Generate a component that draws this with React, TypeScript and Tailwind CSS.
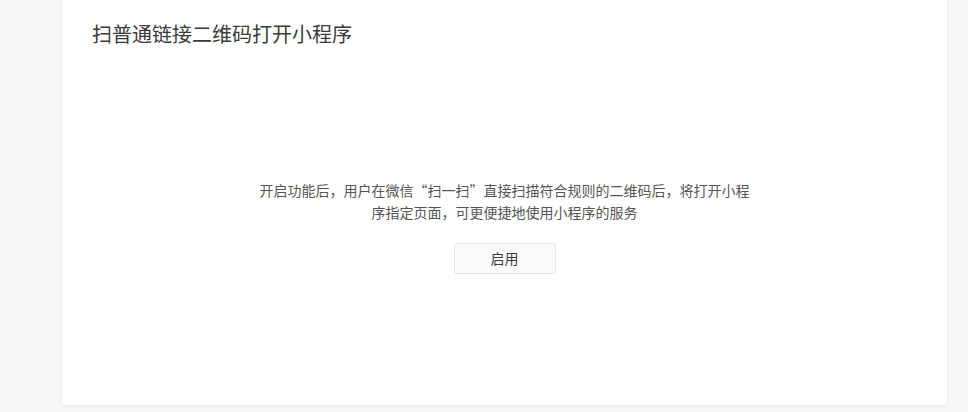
export default function App() {
  return (
    <div
      className="w-[968px] h-[412px] bg-[#f6f7f9] pl-[62px] pr-[21px] pb-[7px]"
      style={{ fontFamily: '"Noto Sans CJK SC", "Liberation Sans", sans-serif' }}
    >
      <div className="h-full bg-white rounded-b-[4px] shadow-[0_1px_3px_rgba(0,0,0,0.08)] pt-[22px] px-[30px] flex flex-col">
        <h1 className="text-[20px] leading-[24px] text-[#3a3a3a] font-normal">扫普通链接二维码打开小程序</h1>
        <div className="mt-[133px] flex flex-col items-center">
          <p className="w-[496px] text-center text-[14px] leading-[22px] text-[#555555]">
            开启功能后，用户在微信“扫一扫”直接扫描符合规则的二维码后，将打开小程序指定页面，可更便捷地使用小程序的服务
          </p>
          <button className="mt-[20px] w-[102px] h-[31px] bg-[#fafafa] border border-[#e6e6e6] rounded-[3px] text-[14px] text-[#3a3a3a]">
            启用
          </button>
        </div>
      </div>
    </div>
  );
}
